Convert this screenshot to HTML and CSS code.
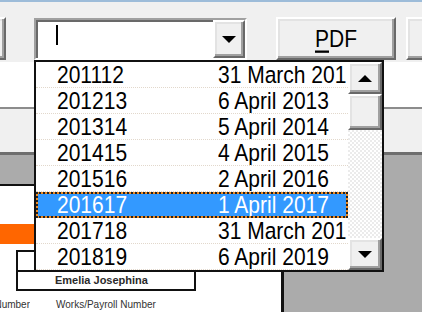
FILE: index.html
```html
<!DOCTYPE html>
<html lang="en">
<head>
    <meta charset="UTF-8">
    <title>Tax Year Picker</title>
    <link rel="stylesheet" href="styles.css">
</head>
<body>
    <div class="screen">
        <div class="topline"></div>
        <div class="toolbar">
            <div class="btn btn-left"></div>
            <div class="combo">
                <div class="combo-field"><div class="caret"></div></div>
                <div class="btn combo-btn"><span class="arrow-down"></span></div>
            </div>
            <div class="btn btn-pdf"><span class="pdf-label"><u>P</u>DF</span></div>
            <div class="btn btn-next"></div>
        </div>
        <div class="band-white"></div>
        <div class="band-light"></div>
        <div class="canvas">
            <div class="page">
                <div class="orange-bar"></div>
                <div class="name-box">
                    <div class="name-row"></div>
                    <div class="name-row">Emelia Josephina</div>
                </div>
                <div class="labels">
                    <span class="lbl-ni">NI Number</span>
                    <span class="lbl-works">Works/Payroll Number</span>
                </div>
            </div>
        </div>

        <div class="dropdown">
            <div class="items">
                <div class="row"><span class="code">201112</span><span class="date">31 March 2012</span></div>
                <div class="row"><span class="code">201213</span><span class="date">6 April 2013</span></div>
                <div class="row"><span class="code">201314</span><span class="date">5 April 2014</span></div>
                <div class="row"><span class="code">201415</span><span class="date">4 April 2015</span></div>
                <div class="row"><span class="code">201516</span><span class="date">2 April 2016</span></div>
                <div class="row selected"><span class="code">201617</span><span class="date">1 April 2017</span></div>
                <div class="row"><span class="code">201718</span><span class="date">31 March 2018</span></div>
                <div class="row"><span class="code">201819</span><span class="date">6 April 2019</span></div>
            </div>
            <div class="scrollbar">
                <div class="btn sb-btn"><span class="arrow-up"></span></div>
                <div class="btn sb-thumb"></div>
                <div class="sb-track"></div>
                <div class="btn sb-btn"><span class="arrow-down"></span></div>
            </div>
        </div>
    </div>
</body>
</html>
```

FILE: styles.css
```css
* {
    box-sizing: border-box;
}
body {
    margin: 0;
    background-color: #f0f0f0;
    font-family: "Liberation Sans", Arial, sans-serif;
    color: #000;
}
.screen {
    position: relative;
    width: 422px;
    height: 312px;
    overflow: hidden;
}
.topline {
    height: 2px;
    background-color: #9dbcd9;
}
.toolbar {
    display: flex;
    align-items: flex-start;
    height: 60px;
    padding-top: 15px;
}
.btn {
    flex: none;
    height: 43px;
    background-color: #f0f0f0;
    border: 2px solid;
    border-color: #fff #696969 #696969 #fff;
    box-shadow: inset -2px -2px 0 #a0a0a0, inset 2px 2px 0 #e3e3e3;
}
.btn-left {
    width: 60px;
    margin-left: -54px;
}
.combo {
    flex: none;
    display: flex;
    width: 213px;
    height: 42px;
    margin: 1px 0 0 28px;
    background-color: #fff;
    border: 2px solid;
    border-color: #a0a0a0 #fff #fff #a0a0a0;
    box-shadow: inset 2px 2px 0 #696969;
}
.combo-field {
    flex: 1;
}
.caret {
    width: 2px;
    height: 20px;
    margin: 5px 0 0 20px;
    background-color: #000;
}
.combo-btn {
    width: 32px;
    height: 38px;
    display: flex;
    align-items: center;
    justify-content: center;
}
.arrow-down {
    width: 0;
    height: 0;
    border-left: 7px solid transparent;
    border-right: 7px solid transparent;
    border-top: 7px solid #000;
}
.arrow-up {
    width: 0;
    height: 0;
    border-left: 7px solid transparent;
    border-right: 7px solid transparent;
    border-bottom: 7px solid #000;
}
.btn-pdf {
    width: 120px;
    margin-left: 29px;
    display: flex;
    align-items: center;
    justify-content: center;
    font-size: 21px;
}
.pdf-label {
    display: inline-block;
    transform: scaleY(1.15);
}
.btn-pdf u {
    text-underline-offset: 3px;
    text-decoration-thickness: 2px;
}
.btn-next {
    width: 100px;
    margin-left: 10px;
}
.band-white {
    height: 45px;
    background-color: #fff;
}
.band-light {
    height: 45px;
    background-color: #f0f0f0;
    border-top: 2px solid #8c8c8c;
}
.canvas {
    height: 160px;
    overflow: hidden;
    background-color: #ababab;
    border-top: 3px solid #6e6e6e;
}
.page {
    width: 294px;
    height: 200px;
    margin: 29px 0 0 -10px;
    background-color: #fff;
    border-top: 2px solid #111;
    border-right: 3px solid #111;
}
.orange-bar {
    width: 250px;
    height: 20px;
    margin: 38px 0 0 10px;
    background-color: #ff6600;
}
.name-box {
    width: 180px;
    height: 41px;
    margin: 6px 0 0 26px;
    border: 2px solid #111;
    display: flex;
    flex-direction: column;
}
.name-row {
    flex: 1;
    display: flex;
    align-items: center;
    padding-left: 37px;
    font-size: 11px;
    font-weight: bold;
    color: #2a2a2a;
}
.name-row + .name-row {
    border-top: 2px solid #111;
}
.labels {
    display: flex;
    margin-top: 8px;
    font-size: 10px;
    color: #333;
    white-space: nowrap;
}
.lbl-ni {
    width: 40px;
    text-align: right;
    overflow: hidden;
    direction: rtl;
}
.lbl-works {
    margin-left: 26px;
}
.dropdown {
    position: absolute;
    left: 34px;
    top: 60px;
    width: 350px;
    height: 212px;
    display: flex;
    background-color: #fff;
    border: 2px solid #111;
}
.items {
    flex: 1;
    overflow: hidden;
}
.row {
    display: flex;
    align-items: center;
    height: 26px;
    font-size: 21px;
    white-space: nowrap;
    overflow: hidden;
    border-bottom: 1px dotted #e2d8cc;
}
.row span {
    display: inline-block;
    transform: scaleY(1.15);
}
.code {
    flex: none;
    width: 182px;
    padding-left: 21px;
}
.date {
    flex: none;
    width: 128px;
    overflow: hidden;
}
.row.selected {
    color: #fff;
    border: 2px dotted #222;
    background: linear-gradient(#3399ff, #3399ff) padding-box, #f08a20 border-box;
}
.row.selected .code {
    width: 180px;
    padding-left: 19px;
}
.scrollbar {
    flex: none;
    width: 34px;
    display: flex;
    flex-direction: column;
    background: repeating-conic-gradient(#fff 0 25%, #ebebeb 0 50%) 0 0 / 4px 4px;
}
.sb-btn {
    height: 32px;
    display: flex;
    align-items: center;
    justify-content: center;
}
.sb-thumb {
    height: 36px;
}
.sb-track {
    flex: 1;
}
```
